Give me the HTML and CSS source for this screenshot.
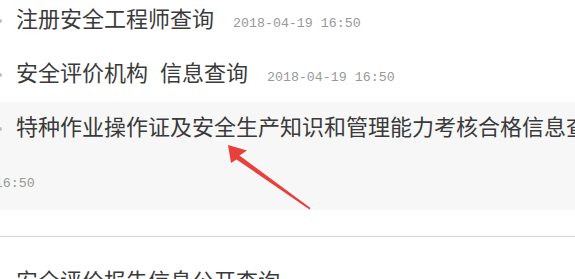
FILE: index.html
```html
<!DOCTYPE html>
<html>
<head>
  <meta charset="UTF-8">
  <title>信息查询</title>
  <link rel="stylesheet" href="styles.css">
</head>
<body>
  <ul class="news first">
    <li><span class="title">注册安全工程师查询</span><span class="date">2018-04-19 16:50</span></li>
    <li><span class="title">安全评价机构 信息查询</span><span class="date">2018-04-19 16:50</span></li>
    <li class="active"><span class="title">特种作业操作证及安全生产知识和管理能力考核合格信息查询</span><div class="date wrapped">2018-04-19 16:50</div></li>
  </ul>

  <hr class="divider">

  <ul class="news">
    <li><span class="title">安全评价报告信息公开查询</span></li>
  </ul>

  <!-- 标注箭头 -->
  <svg class="arrow" width="575" height="279" viewBox="0 0 575 279">
    <polygon points="228,145 247,150.5 239.5,155.5 310.5,208 309.5,209.5 236.5,159.5 231,163" fill="#e8403c"/>
  </svg>
</body>
</html>
```

FILE: styles.css
```css
body {
  margin: 0;
  width: 575px;
  height: 279px;
  overflow: hidden;
  background-color: #fff;
  font-family: "Noto Sans CJK SC", "Noto Sans", sans-serif;
  position: relative;
}

.news {
  list-style: none;
  margin: 0;
  padding: 0;
}

.news.first {
  margin-top: -6px;
}

.news li {
  height: 54px;
  padding-left: 16px;
  font-size: 22px;
  line-height: 46px;
  white-space: nowrap;
}

.news li::before {
  content: "";
  display: inline-block;
  width: 4px;
  height: 4px;
  border-radius: 50%;
  background-color: #b4c0cd;
  margin-left: -18px;
  margin-right: 14px;
  vertical-align: middle;
}

.news li.active {
  height: 108px;
  background-color: #f7f7f7;
}

.title {
  color: #3a3a3a;
  word-spacing: 7px;
}

.date {
  font-family: "Liberation Mono", "DejaVu Sans Mono", monospace;
  font-size: 13.3px;
  color: #999;
  margin-left: 19px;
}

.date.wrapped {
  margin: 14px 0 0 -109px;
  line-height: 44px;
}

.divider {
  border: 0;
  border-top: 1px solid #d4d4d4;
  margin: 26px 0 19px;
}

.arrow {
  position: absolute;
  left: 0;
  top: 0;
}
```
